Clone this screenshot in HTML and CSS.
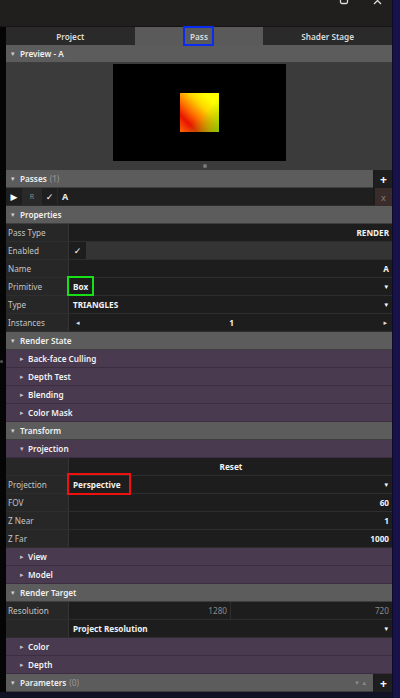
FILE: index.html
```html
<!DOCTYPE html>
<html>
<head>
<meta charset="utf-8">
<link rel="stylesheet" href="styles.css">
</head>
<body>
<div class="screen">
  <div class="content">
    <div class="titlebar">
      <svg class="ticon restore" width="10" height="10" viewBox="0 0 10 10"><rect x="1.5" y="-4" width="7" height="7.5" rx="1.5" fill="none" stroke="#ddd" stroke-width="1.3"/></svg>
      <svg class="ticon close" width="10" height="10" viewBox="0 0 10 10"><path d="M1 -3 L8 4 M8 -3 L1 4" stroke="#ddd" stroke-width="1.3"/></svg>
    </div>
    <div class="body">
      <div class="gutter"><span class="gdot"></span></div>
      <div class="panel">
        <div class="tabs">
          <div class="tab">Project</div>
          <div class="tab active"><span class="boxed blue">Pass</span></div>
          <div class="tab">Shader Stage</div>
        </div>
        <div class="hdr"><span class="tri">▾</span>Preview - A</div>
        <div class="preview">
          <div class="canvas"><div class="quad"></div></div>
          <span class="pdot"></span>
        </div>
        <div class="hrow">
          <div class="hdr grow"><span class="tri">▾</span>Passes <span class="count">(1)</span></div>
          <div class="btn plus">+</div>
        </div>
        <div class="passrow">
          <div class="pc play">▶</div>
          <div class="pc r">R</div>
          <div class="pc chk">✓</div>
          <div class="pc name">A</div>
          <div class="btn x">x</div>
        </div>
        <div class="hdr"><span class="tri">▾</span>Properties</div>
        <div class="prop"><div class="lbl">Pass Type</div><div class="val right bold">RENDER</div></div>
        <div class="prop"><div class="lbl">Enabled</div><div class="val split"><span class="chkcell">✓</span><span class="filler"></span></div></div>
        <div class="prop"><div class="lbl">Name</div><div class="val right bold">A</div></div>
        <div class="prop"><div class="lbl">Primitive</div><div class="val bold"><span class="boxed green">Box</span><span class="dd">▾</span></div></div>
        <div class="prop"><div class="lbl">Type</div><div class="val bold">TRIANGLES<span class="dd">▾</span></div></div>
        <div class="prop"><div class="lbl">Instances</div><div class="val spin bold"><span class="arr">◂</span><span>1</span><span class="arr">▸</span></div></div>
        <div class="hdr"><span class="tri">▾</span>Render State</div>
        <div class="sub"><span class="stri">▸</span>Back-face Culling</div>
        <div class="sub"><span class="stri">▸</span>Depth Test</div>
        <div class="sub"><span class="stri">▸</span>Blending</div>
        <div class="sub"><span class="stri">▸</span>Color Mask</div>
        <div class="hdr"><span class="tri">▾</span>Transform</div>
        <div class="sub"><span class="stri">▾</span>Projection</div>
        <div class="prop"><div class="lbl"></div><div class="val center bold">Reset</div></div>
        <div class="prop"><div class="lbl">Projection</div><div class="val bold"><span class="boxed red">Perspective</span><span class="dd">▾</span></div></div>
        <div class="prop"><div class="lbl">FOV</div><div class="val right bold">60</div></div>
        <div class="prop"><div class="lbl">Z Near</div><div class="val right bold">1</div></div>
        <div class="prop"><div class="lbl">Z Far</div><div class="val right bold">1000</div></div>
        <div class="sub"><span class="stri">▸</span>View</div>
        <div class="sub"><span class="stri">▸</span>Model</div>
        <div class="hdr"><span class="tri">▾</span>Render Target</div>
        <div class="prop"><div class="lbl">Resolution</div><div class="val two"><span class="half">1280</span><span class="half">720</span></div></div>
        <div class="prop"><div class="lbl"></div><div class="val bold">Project Resolution<span class="dd">▾</span></div></div>
        <div class="sub"><span class="stri">▸</span>Color</div>
        <div class="sub"><span class="stri">▸</span>Depth</div>
        <div class="hrow">
          <div class="hdr grow"><span class="tri">▾</span>Parameters <span class="count">(0)</span><span class="updown">▾ ▴</span></div>
          <div class="btn plus">+</div>
        </div>
      </div>
    </div>
    <div class="bottom"></div>
  </div>
  <div class="edge"></div>
</div>
</body>
</html>
```

FILE: styles.css
```css
* { box-sizing: border-box; }
html, body { margin: 0; padding: 0; }
body {
  width: 400px;
  height: 698px;
  overflow: hidden;
  background: #000;
  font-family: "Noto Sans", "DejaVu Sans", sans-serif;
  font-size: 8.2px;
  color: #e6e6e6;
}
.screen { display: flex; height: 698px; }
.content { width: 392px; display: flex; flex-direction: column; }
.edge { width: 8px; background: #17124a; border-left: 1px solid #0c0a2a; }
.titlebar {
  height: 27px;
  background: #211e1e;
  border-bottom: 1px solid #161414;
  display: flex;
  justify-content: flex-end;
  align-items: flex-start;
  padding-right: 9px;
  gap: 24px;
}
.ticon { display: block; }
.body { display: flex; flex: 1; }
.gutter { width: 6px; background: #050505; position: relative; }
.gdot { position: absolute; left: 0; top: 333px; width: 3px; height: 3px; border-radius: 50%; background: #555; }
.panel { width: 386px; background: #1c1c1c; display: flex; flex-direction: column; }
.bottom { height: 6px; background: #121224; }

.tabs { display: flex; height: 18px; background: #2a2a2a; }
.tab {
  flex: 1;
  display: flex; align-items: center; justify-content: center;
  color: #dcdcdc;
  font-weight: 600;
}
.tab.active { background: #5a5a5a; }
.boxed { position: relative; }
.boxed::after { content: ""; position: absolute; pointer-events: none; }
.boxed.blue::after { left: -7px; right: -6px; top: -5px; bottom: -4px; border: 2px solid #0a2cf0; }
.boxed.green::after { left: -6px; right: -6px; top: -5px; bottom: -4px; border: 2px solid #16e016; }
.boxed.red::after { left: -6px; right: -10px; top: -6px; bottom: -5px; border: 2px solid #f01010; }

.hdr {
  height: 18px;
  background: #5c5c5c;
  border-bottom: 1px solid #3e3e3e;
  display: flex; align-items: center;
  padding-left: 5px;
  color: #f0f0f0;
  font-weight: 600;
}
.tri { font-size: 7px; color: #cfcfcf; width: 9px; font-weight: 400; }
.count { color: #9a9a9a; margin-left: 3px; font-weight: 400; }
.hrow { display: flex; height: 18px; }
.hdr.grow { flex: 1; margin-right: 2px; }
.updown { margin-left: auto; margin-right: 6px; font-size: 7px; color: #8a8a8a; letter-spacing: 1px; font-weight: 400; }
.btn {
  width: 17px; height: 18px;
  display: flex; align-items: center; justify-content: center;
  font-weight: 700;
}
.btn.plus { background: #1e1e1e; color: #fff; font-size: 12px; }
.btn.x { background: #3b2c2c; color: #8a7a7a; font-size: 9px; font-weight: 400; }

.preview {
  height: 107px;
  background: #3b3b3b;
  position: relative;
  display: flex; justify-content: center;
  padding-top: 1px;
}
.canvas {
  width: 173px; height: 97px; background: #000;
  display: flex; align-items: center; justify-content: center;
  margin-left: 1px;
}
.quad {
  width: 39px; height: 39px;
  background:
    linear-gradient(to bottom right, rgba(255,255,0,0) 55%, rgba(120,200,0,0.85) 100%),
    linear-gradient(to top right, #ff6a00 0%, #e81400 22%, #ff7a00 42%, #ffd800 62%, #ffff00 80%);
}
.pdot { position: absolute; left: 197px; bottom: 2px; width: 4px; height: 4px; border-radius: 50%; background: #7a7a7a; }

.passrow { display: flex; height: 18px; border-bottom: 1px solid #2c2c2c; }
.pc { display: flex; align-items: center; justify-content: center; background: #1f1f1f; border-right: 1px solid #2a2a2a; }
.pc.play { width: 17px; color: #fff; font-size: 9px; }
.pc.r { width: 19px; background: #292929; color: #888; font-size: 7px; }
.pc.chk { width: 16px; color: #fff; font-weight: 700; font-size: 9px; }
.pc.name { flex: 1; justify-content: flex-start; padding-left: 4px; font-weight: 700; margin-right: 2px; border-right: 0; font-size: 9px; }

.prop { display: flex; height: 18px; border-bottom: 1px solid #2e2e2e; }
.lbl {
  width: 63px; flex: none;
  background: #272727;
  border-right: 1px solid #343434;
  display: flex; align-items: center;
  padding-left: 2px;
  color: #c4c4c4;
}
.val {
  flex: 1;
  display: flex; align-items: center;
  padding: 0 3px 0 4px;
  background: #1d1d1d;
  color: #f2f2f2;
}
.bold { font-weight: 700; }
.right { justify-content: flex-end; }
.center { justify-content: center; }
.dd { margin-left: auto; font-size: 7px; color: #fff; padding-right: 1px; }
.spin { justify-content: space-between; padding: 0 5px 0 7px; }
.arr { font-size: 7px; color: #ddd; }
.split { padding: 0; background: #343434; }
.chkcell { width: 17px; height: 100%; background: #1d1d1d; display: flex; align-items: center; justify-content: center; color: #fff; font-size: 9px; }
.filler { flex: 1; }
.two { padding: 0; }
.half { flex: 1; height: 100%; display: flex; align-items: center; justify-content: flex-end; padding-right: 3px; color: #8a8a8a; font-weight: 400; }
.half:first-child { border-right: 1px solid #2e2e2e; }

.sub {
  height: 18px;
  background: #4a3a4f;
  border-bottom: 1px solid #3c2e40;
  display: flex; align-items: center;
  padding-left: 14px;
  color: #f2f2f2;
  font-weight: 600;
}
.stri { font-size: 7px; color: #c8bcc8; width: 8px; font-weight: 400; }
```
